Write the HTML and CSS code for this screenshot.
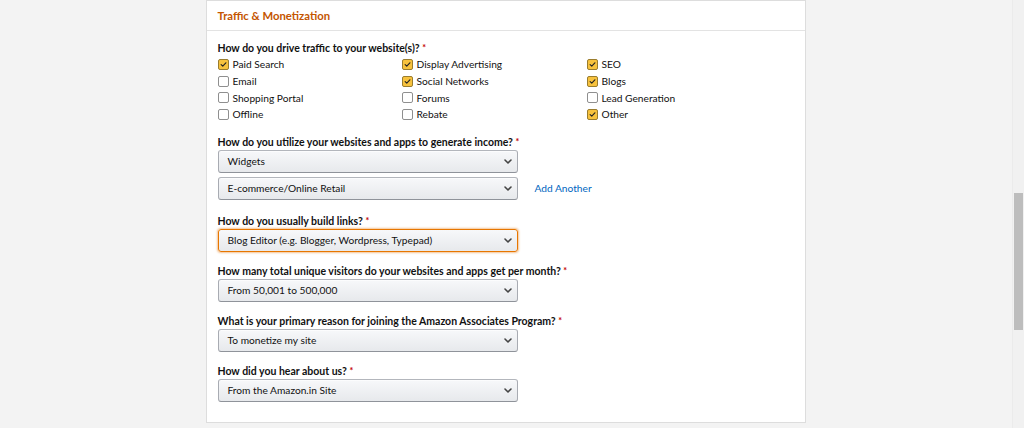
FILE: index.html
```html
<!DOCTYPE html>
<html lang="en">
<head>
<meta charset="utf-8">
<title>Traffic &amp; Monetization</title>
<link rel="stylesheet" href="styles.css">
</head>
<body>
<div class="page">
  <section class="card">
    <header class="card-head"><h2 class="card-title">Traffic &amp; Monetization</h2></header>
    <div class="card-body">
      <div class="field">
        <div class="label">How do you drive traffic to your website(s)? <span class="req">*</span></div>
        <div class="checks">
          <label class="check"><span class="box on"><svg viewBox="0 0 11 11"><polyline points="2.6,5.6 4.6,7.4 8.4,3.4"/></svg></span>Paid Search</label>
          <label class="check"><span class="box on"><svg viewBox="0 0 11 11"><polyline points="2.6,5.6 4.6,7.4 8.4,3.4"/></svg></span>Display Advertising</label>
          <label class="check"><span class="box on"><svg viewBox="0 0 11 11"><polyline points="2.6,5.6 4.6,7.4 8.4,3.4"/></svg></span>SEO</label>
          <label class="check"><span class="box"></span>Email</label>
          <label class="check"><span class="box on"><svg viewBox="0 0 11 11"><polyline points="2.6,5.6 4.6,7.4 8.4,3.4"/></svg></span>Social Networks</label>
          <label class="check"><span class="box on"><svg viewBox="0 0 11 11"><polyline points="2.6,5.6 4.6,7.4 8.4,3.4"/></svg></span>Blogs</label>
          <label class="check"><span class="box"></span>Shopping Portal</label>
          <label class="check"><span class="box"></span>Forums</label>
          <label class="check"><span class="box"></span>Lead Generation</label>
          <label class="check"><span class="box"></span>Offline</label>
          <label class="check"><span class="box"></span>Rebate</label>
          <label class="check"><span class="box on"><svg viewBox="0 0 11 11"><polyline points="2.6,5.6 4.6,7.4 8.4,3.4"/></svg></span>Other</label>
        </div>
      </div>

      <div class="field field-wide">
        <div class="label">How do you utilize your websites and apps to generate income? <span class="req">*</span></div>
        <div class="select"><span>Widgets</span><svg class="chev" viewBox="0 0 8 5"><polyline points="1,1 4,4 7,1"/></svg></div>
        <div class="select-row">
          <div class="select"><span>E-commerce/Online Retail</span><svg class="chev" viewBox="0 0 8 5"><polyline points="1,1 4,4 7,1"/></svg></div>
          <a class="add-link" href="#">Add Another</a>
        </div>
      </div>

      <div class="field">
        <div class="label">How do you usually build links? <span class="req">*</span></div>
        <div class="select focus"><span>Blog Editor (e.g. Blogger, Wordpress, Typepad)</span><svg class="chev" viewBox="0 0 8 5"><polyline points="1,1 4,4 7,1"/></svg></div>
      </div>

      <div class="field">
        <div class="label">How many total unique visitors do your websites and apps get per month? <span class="req">*</span></div>
        <div class="select"><span>From 50,001 to 500,000</span><svg class="chev" viewBox="0 0 8 5"><polyline points="1,1 4,4 7,1"/></svg></div>
      </div>

      <div class="field">
        <div class="label">What is your primary reason for joining the Amazon Associates Program? <span class="req">*</span></div>
        <div class="select"><span>To monetize my site</span><svg class="chev" viewBox="0 0 8 5"><polyline points="1,1 4,4 7,1"/></svg></div>
      </div>

      <div class="field">
        <div class="label">How did you hear about us? <span class="req">*</span></div>
        <div class="select"><span>From the Amazon.in Site</span><svg class="chev" viewBox="0 0 8 5"><polyline points="1,1 4,4 7,1"/></svg></div>
      </div>
    </div>
  </section>
</div>
<div class="scrollbar"><div class="thumb"></div></div>
</body>
</html>
```

FILE: styles.css
```css
* { box-sizing: border-box; }
html, body { margin: 0; padding: 0; }
body {
  background: #f3f3f3;
  font-family: Lato, "Open Sans", "Liberation Sans", sans-serif;
  font-size: 10.2px;
  color: #111;
  height: 428px;
  overflow: hidden;
}
.page {
  width: 1012px;
  display: flex;
  justify-content: center;
}
.card {
  width: 600px;
  margin-left: -1px;
  background: #fff;
  border: 1px solid #ddd;
}
.card-head {
  height: 30px;
  border-bottom: 1px solid #e3e3e3;
  padding: 0 11px 1px;
  display: flex;
  align-items: center;
}
.card-title {
  margin: 0;
  font-size: 11.3px;
  font-weight: 700;
  color: #c45500;
}
.card-body {
  padding: 9px 11px 20px;
}
.field { margin-bottom: 11px; }
.field:last-child { margin-bottom: 0; }
.field-wide { margin-bottom: 13px; }
.label {
  font-weight: 700;
  font-size: 10.5px;
  line-height: 16px;
  height: 16px;
}
.req { color: #c40000; font-size: 9px; vertical-align: 1px; }
.checks {
  display: grid;
  grid-template-columns: 184px 185px 1fr;
  grid-auto-rows: 16.7px;
}
.check {
  display: flex;
  align-items: center;
  gap: 4px;
  color: #111;
}
.box {
  width: 11px;
  height: 11px;
  border: 1px solid #8f8f8f;
  border-radius: 2px;
  background: #fff;
  display: block;
  flex: none;
}
.box svg { display: block; width: 9px; height: 9px; margin: 0; }
.box.on {
  background: #f7c23d;
  border-color: #9a7d2e;
}
.box svg polyline {
  fill: none;
  stroke: #222;
  stroke-width: 1.4;
  stroke-linecap: round;
  stroke-linejoin: round;
}
.select {
  width: 300px;
  height: 23px;
  border: 1px solid #adb1b8;
  border-color: #b3b6bc #a8abb2 #8f939a;
  border-radius: 3px;
  background: linear-gradient(to bottom, #f7f8fa, #e7e9ec);
  box-shadow: 0 1px 0 rgba(255,255,255,.6) inset;
  display: flex;
  align-items: center;
  justify-content: space-between;
  padding: 0 5px 0 9px;
  color: #111;
}
.select + .select-row { margin-top: 4px; }
.select.focus {
  border-color: #e77600;
  box-shadow: 0 0 2px 1px rgba(228,121,17,.45);
}
.chev { width: 8px; height: 5px; display: block; }
.chev polyline {
  fill: none;
  stroke: #444;
  stroke-width: 1.6;
  stroke-linecap: round;
  stroke-linejoin: round;
}
.select-row {
  display: flex;
  align-items: center;
  gap: 17px;
}
.add-link {
  color: #0066c0;
  text-decoration: none;
}
.scrollbar {
  position: fixed;
  top: 0;
  right: 0;
  width: 12px;
  height: 428px;
  background: #f1f1f1;
  border-left: 1px solid #ebebeb;
}
.thumb {
  position: absolute;
  top: 193px;
  left: 1px;
  width: 9px;
  height: 137px;
  background: #bdbdbd;
}
```
